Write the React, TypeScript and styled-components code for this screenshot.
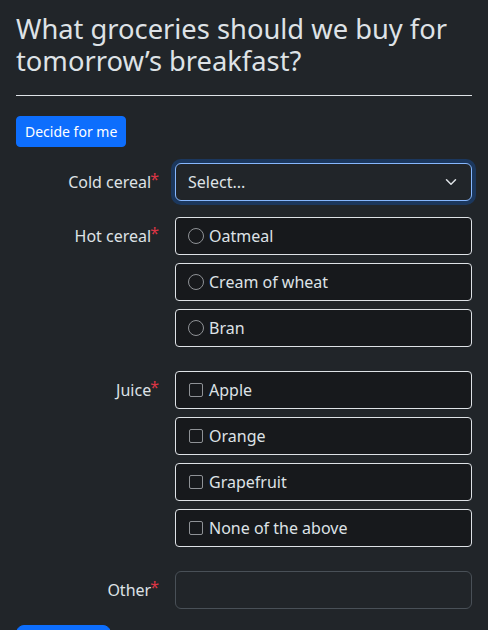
import React, { useState } from "react";
import styled, { createGlobalStyle } from "styled-components";

const GlobalStyle = createGlobalStyle`
  html, body {
    margin: 0;
    padding: 0;
    background: #212529;
  }
  body {
    font-family: "Noto Sans", "Liberation Sans", sans-serif;
    color: #dee2e6;
    font-size: 16px;
    line-height: 1.5;
  }
  * { box-sizing: border-box; }
`;

const Page = styled.div`
  padding: 13px 16px 0;
  height: 630px;
  overflow: hidden;
`;

const Title = styled.h1`
  margin: 0;
  font-size: 27.3px;
  line-height: 32px;
  font-weight: 400;
  color: #dee2e6;
`;

const Rule = styled.hr`
  margin: 18px 0 20px;
  border: 0;
  border-top: 1px solid #dee2e6;
`;

const Button = styled.button<{ $small?: boolean }>`
  display: inline-block;
  font-family: inherit;
  color: #fff;
  background: #0d6efd;
  border: 1px solid #0d6efd;
  border-radius: ${(p) => (p.$small ? "4px" : "8px")};
  font-size: ${(p) => (p.$small ? "14px" : "20px")};
  line-height: ${(p) => (p.$small ? "21px" : "30px")};
  padding: ${(p) => (p.$small ? "4px 8px" : "8px 13px")};
  cursor: pointer;
`;

const Form = styled.form`
  display: flex;
  flex-direction: column;
  gap: 16px;
  margin-top: 16px;
`;

const Row = styled.div`
  display: grid;
  grid-template-columns: 143px 1fr;
  column-gap: 16px;
  align-items: start;
`;

const Label = styled.label`
  text-align: right;
  padding-top: 7px;
  line-height: 24px;
  color: #dee2e6;
`;

const Star = styled.span`
  color: #dc3545;
  position: relative;
  top: -3px;
  margin-left: -1px;
`;

const SelectBox = styled.div`
  display: flex;
  align-items: center;
  justify-content: space-between;
  height: 38px;
  padding: 0 14px 0 12px;
  border: 1px solid #86b7fe;
  border-radius: 6px;
  background: #212529;
  box-shadow: 0 0 0 4px rgba(13, 110, 253, 0.25);
  color: #dee2e6;
`;

const Options = styled.div`
  display: flex;
  flex-direction: column;
  gap: 8px;
  padding-bottom: 8px;
`;

const Option = styled.label`
  display: flex;
  align-items: center;
  gap: 5px;
  height: 38px;
  padding: 0 12px;
  background: #17191c;
  border: 1px solid #dee2e6;
  border-radius: 4px;
  color: #dee2e6;
  cursor: pointer;
`;

const Mark = styled.span<{ $round?: boolean }>`
  display: inline-block;
  flex: none;
  width: ${(p) => (p.$round ? "16px" : "14px")};
  height: ${(p) => (p.$round ? "16px" : "14px")};
  border: 1.5px solid #8f9296;
  border-radius: ${(p) => (p.$round ? "50%" : "2px")};
  margin-left: ${(p) => (p.$round ? "0" : "1px")};
  margin-right: ${(p) => (p.$round ? "0" : "1px")};
`;

const TextInput = styled.input`
  height: 38px;
  width: 100%;
  padding: 6px 12px;
  font: inherit;
  color: #dee2e6;
  background: #212529;
  border: 1px solid #495057;
  border-radius: 6px;
  outline: none;
`;

const Chevron = () => (
  <svg width="12" height="12" viewBox="0 0 16 16" fill="none">
    <path d="M2 5l6 6 6-6" stroke="#dee2e6" strokeWidth="2" strokeLinecap="round" strokeLinejoin="round" />
  </svg>
);

const hotCereals = ["Oatmeal", "Cream of wheat", "Bran"];
const juices = ["Apple", "Orange", "Grapefruit", "None of the above"];

export default function App() {
  const [other, setOther] = useState("");
  return (
    <Page>
      <GlobalStyle />
      <Title>What groceries should we buy for tomorrow’s breakfast?</Title>
      <Rule />
      <Button $small type="button">Decide for me</Button>
      <Form onSubmit={(e) => e.preventDefault()}>
        <Row>
          <Label>Cold cereal<Star>*</Star></Label>
          <SelectBox>
            <span>Select...</span>
            <Chevron />
          </SelectBox>
        </Row>
        <Row>
          <Label>Hot cereal<Star>*</Star></Label>
          <Options>
            {hotCereals.map((c) => (
              <Option key={c}>
                <Mark $round />
                {c}
              </Option>
            ))}
          </Options>
        </Row>
        <Row>
          <Label>Juice<Star>*</Star></Label>
          <Options>
            {juices.map((j) => (
              <Option key={j}>
                <Mark />
                {j}
              </Option>
            ))}
          </Options>
        </Row>
        <Row>
          <Label>Other<Star>*</Star></Label>
          <TextInput value={other} onChange={(e) => setOther(e.target.value)} />
        </Row>
        <div>
          <Button type="submit">Submit</Button>
        </div>
      </Form>
    </Page>
  );
}
